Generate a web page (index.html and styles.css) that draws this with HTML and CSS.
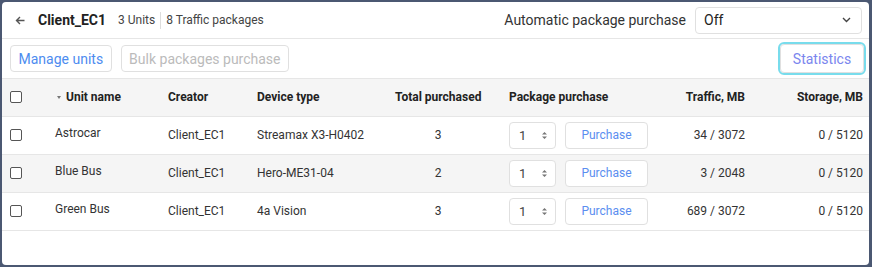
FILE: index.html
```html
<!DOCTYPE html>
<html lang="en">
<head>
    <meta charset="UTF-8">
    <title>Client_EC1 - Traffic packages</title>
    <link rel="stylesheet" href="styles.css">
</head>
<body>
<div class="panel">
    <div class="header">
        <a class="back" href="#">
            <svg width="10" height="9" viewBox="0 0 10 9"><path d="M9.5 4.5H1.5M5 1L1.5 4.5L5 8" fill="none" stroke="#555" stroke-width="1.4"/></svg>
        </a>
        <h1>Client_EC1</h1>
        <span class="meta">3 Units</span>
        <span class="meta sep">8 Traffic packages</span>
        <label class="auto">Automatic package purchase</label>
        <div class="select">
            <span>Off</span>
            <svg width="9" height="6" viewBox="0 0 9 6"><path d="M1 1L4.5 4.5L8 1" fill="none" stroke="#444" stroke-width="1.4"/></svg>
        </div>
    </div>

    <div class="toolbar">
        <button class="btn link">Manage units</button>
        <button class="btn" disabled>Bulk packages purchase</button>
        <button class="btn stats">Statistics</button>
    </div>

    <table>
        <colgroup>
            <col style="width:45px"><col style="width:113px"><col style="width:89px"><col style="width:138px">
            <col style="width:114px"><col style="width:159px"><col style="width:93px"><col style="width:116px">
        </colgroup>
        <thead>
            <tr>
                <th><span class="check"></span></th>
                <th><span class="sort"></span>Unit name</th>
                <th>Creator</th>
                <th>Device type</th>
                <th class="center">Total purchased</th>
                <th>Package purchase</th>
                <th class="right">Traffic, MB</th>
                <th class="right last">Storage, MB</th>
            </tr>
        </thead>
        <tbody>
            <tr>
                <td><span class="check"></span></td>
                <td class="name">Astrocar</td>
                <td>Client_EC1</td>
                <td>Streamax X3-H0402</td>
                <td class="center">3</td>
                <td><div class="buy"><span class="num">1<svg width="5" height="9" viewBox="0 0 5 9"><path d="M0 3.5L2.5 1L5 3.5ZM0 5.5L2.5 8L5 5.5Z" fill="#777"/></svg></span><button class="btn small">Purchase</button></div></td>
                <td class="right">34 / 3072</td>
                <td class="right last">0 / 5120</td>
            </tr>
            <tr>
                <td><span class="check"></span></td>
                <td class="name">Blue Bus</td>
                <td>Client_EC1</td>
                <td>Hero-ME31-04</td>
                <td class="center">2</td>
                <td><div class="buy"><span class="num">1<svg width="5" height="9" viewBox="0 0 5 9"><path d="M0 3.5L2.5 1L5 3.5ZM0 5.5L2.5 8L5 5.5Z" fill="#777"/></svg></span><button class="btn small">Purchase</button></div></td>
                <td class="right">3 / 2048</td>
                <td class="right last">0 / 5120</td>
            </tr>
            <tr>
                <td><span class="check"></span></td>
                <td class="name">Green Bus</td>
                <td>Client_EC1</td>
                <td>4a Vision</td>
                <td class="center">3</td>
                <td><div class="buy"><span class="num">1<svg width="5" height="9" viewBox="0 0 5 9"><path d="M0 3.5L2.5 1L5 3.5ZM0 5.5L2.5 8L5 5.5Z" fill="#777"/></svg></span><button class="btn small">Purchase</button></div></td>
                <td class="right">689 / 3072</td>
                <td class="right last">0 / 5120</td>
            </tr>
        </tbody>
    </table>
</div>
</body>
</html>
```
FILE: styles.css
```css
* {
    box-sizing: border-box;
}

body {
    margin: 0;
    padding: 2px 3px 2px 2px;
    height: 267px;
    background: #4b5872;
    font-family: Roboto, 'Liberation Sans', sans-serif;
    color: #333;
}

.panel {
    background: #fff;
    height: 263px;
    border-radius: 4px;
    overflow: hidden;
}

.header {
    display: flex;
    align-items: center;
    height: 37px;
    padding: 0 7px 0 13px;
    border-bottom: 1px solid #e6e6e6;
}

.back {
    display: flex;
    width: 10px;
    margin-right: 13px;
}

h1 {
    margin: 0 12px 0 0;
    font-size: 14px;
    font-weight: 700;
    color: #222;
}

.meta {
    font-size: 12px;
    color: #444;
}

.meta.sep {
    margin-left: 5px;
    padding-left: 5px;
    border-left: 1px solid #ddd;
    line-height: 17px;
}

.auto {
    margin-left: auto;
    margin-right: 9px;
    font-size: 14px;
    color: #333;
}

.select {
    display: flex;
    align-items: center;
    justify-content: space-between;
    width: 167px;
    height: 27px;
    padding: 0 10px 0 8px;
    border: 1px solid #e0e0e0;
    border-radius: 4px;
    font-size: 14px;
    color: #222;
}

.toolbar {
    display: flex;
    align-items: center;
    gap: 9px;
    height: 40px;
    padding: 0 5px 0 8px;
    border-bottom: 1px solid #e6e6e6;
}

.btn {
    height: 27px;
    padding: 0 7.5px;
    background: #fff;
    border: 1px solid #e0e0e0;
    border-radius: 4px;
    font-family: inherit;
    font-size: 14px;
    color: #bbb;
}

.btn.link {
    color: #4d8cf0;
}

.btn.stats {
    margin-left: auto;
    height: 29px;
    width: 84px;
    color: #7a86ee;
    outline: 2px solid #78dcec;
    outline-offset: 0;
}

table {
    width: 100%;
    table-layout: fixed;
    border-collapse: collapse;
    font-size: 12px;
}

th {
    height: 37px;
    padding: 0 8px;
    background: #f5f5f5;
    text-align: left;
    font-weight: 700;
    color: #222;
    white-space: nowrap;
    border-bottom: 1px solid #e6e6e6;
}

td {
    height: 38px;
    padding: 0 8px;
    color: #333;
    border-bottom: 1px solid #e6e6e6;
}

tbody tr:nth-child(2) {
    background: #f5f5f5;
}

td.name {
    padding-bottom: 5px;
}

.center {
    text-align: center;
    padding-right: 20px;
}

.right {
    text-align: right;
}

.last {
    padding-right: 6px;
}

.check {
    display: block;
    width: 12px;
    height: 12px;
    border: 1px solid #555;
    border-radius: 2px;
    background: #fff;
}

.sort {
    display: inline-block;
    margin: 0 5px 2px 2px;
    border-left: 2.5px solid transparent;
    border-right: 2.5px solid transparent;
    border-top: 3px solid #777;
    vertical-align: middle;
}

.buy {
    display: flex;
    align-items: center;
    gap: 9px;
}

.num {
    display: flex;
    align-items: center;
    justify-content: space-between;
    width: 47px;
    height: 27px;
    padding: 0 8px 0 9px;
    border: 1px solid #e0e0e0;
    border-radius: 4px;
    background: #fff;
    font-size: 13px;
    color: #444;
}

.btn.small {
    width: 83px;
    font-size: 12px;
    color: #5b8ef0;
}
```
